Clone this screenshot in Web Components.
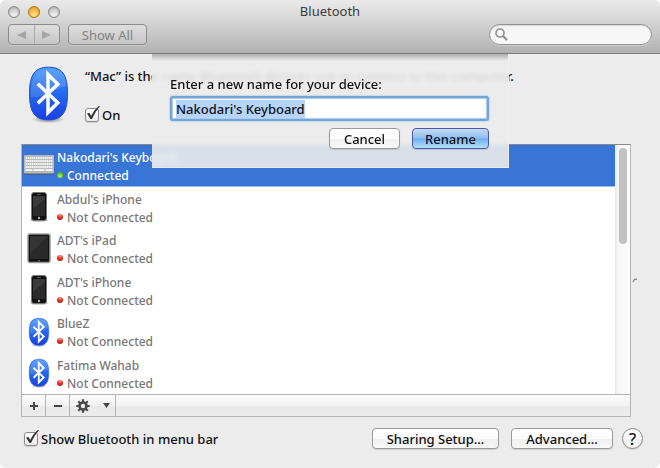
<!DOCTYPE html>
<html lang="en">
<head>
<meta charset="utf-8">
<title>Bluetooth</title>
<style>
body { margin: 0; background: #fff; font: 500 13px/18px "Noto Sans", "Open Sans", sans-serif; color: #111; }
</style>
</head>
<body>
<bt-window></bt-window>
<script>
const define = (name, html, setup) => customElements.define(name, class extends HTMLElement {
  constructor() {
    super();
    const t = document.createElement('template');
    t.innerHTML = html;
    this.attachShadow({ mode: 'open' }).append(t.content.cloneNode(true));
  }
  connectedCallback() { if (setup) setup(this, this.shadowRoot); }
});

define('bt-logo', `
<style>:host{display:block;flex:none} svg{display:block;width:100%;height:100%;overflow:visible}</style>
<svg viewBox="0 0 40 56" aria-hidden="true">
  <defs>
    <linearGradient id="g" x1="0" y1="0" x2="0" y2="1"><stop offset="0" stop-color="#4a98fb"/><stop offset=".5" stop-color="#2568f0"/><stop offset="1" stop-color="#1a3fe0"/></linearGradient>
    <radialGradient id="s"><stop offset="0" stop-color="#000" stop-opacity=".5"/><stop offset="1" stop-color="#000" stop-opacity="0"/></radialGradient>
  </defs>
  <ellipse cx="20" cy="54" rx="17" ry="4" fill="url(#s)"/>
  <path d="M20 .5C34 .5 39.500 8 39.500 27.500S34 54.500 20 54.500 .5 47 .5 27.500 6 .5 20 .5Z" fill="url(#g)" stroke="#1c4fd0"/>
  <path d="M2 31C2 9 7 2 20 2s18 6 18 18C28 21 15 33 2 31Z" fill="#fff" opacity=".12"/>
  <path d="M9 17.500 29.500 37 19.500 47V8L29.500 18 9 37.500" fill="none" stroke="#fff" stroke-width="3.600" stroke-linejoin="miter"/>
</svg>`);

define('bt-device-icon', `
<style>:host{display:grid;place-items:center;width:32px;height:36px;flex:none} svg{display:none} bt-logo{display:none;width:20px;height:28px}
:host([kind=keyboard]) .keyboard,:host([kind=phone]) .phone,:host([kind=pad]) .pad,:host([kind=logo]) bt-logo{display:block}</style>
<svg class="keyboard" width="30" height="20" viewBox="0 0 30 20">
  <rect y="1" width="30" height="19" rx="1" fill="#555" opacity=".6"/><rect width="30" height="18.500" rx="1" fill="#b9bab8"/>
  <path d="M1.500 3h27M1.500 6h27M1.500 9h27M1.500 12h27" stroke="#f4f4f4" stroke-width="2" stroke-dasharray="1.600 .5"/>
  <path d="M1.500 15h7M9.500 15h11M21.500 15h7" stroke="#f4f4f4" stroke-width="2"/>
</svg>
<svg class="phone" width="18" height="30" viewBox="0 0 18 30">
  <ellipse cx="9" cy="28" rx="9" ry="2" fill="#000" opacity=".2"/>
  <rect x="1.500" y=".5" width="15" height="28" rx="2.500" fill="#111" stroke="#777"/>
  <rect x="3" y="4" width="12" height="20" fill="#2b2b2b"/><path d="M3 4h12v3L3 17Z" fill="#3b3b3b"/>
  <path d="M7 2.500h4" stroke="#555"/><circle cx="9" cy="26" r="1.200" fill="#aaa"/>
</svg>
<svg class="pad" width="24" height="31" viewBox="0 0 24 31">
  <rect x="1" y="1" width="22" height="28.500" rx="2" fill="#111" stroke="#999" stroke-width="1.500"/>
  <rect x="3" y="3" width="18" height="23" fill="#292929"/><path d="M3 3h18L3 21Z" fill="#343434"/><circle cx="12" cy="27.700" r=".8" fill="#888"/>
</svg>
<bt-logo></bt-logo>`);

define('bt-device', `
<style>
:host{display:flex;align-items:center;gap:2px;padding-left:1px;color:#777;box-sizing:border-box;min-height:0;font-size:12px}
:host([selected]){background:#3875d7;color:#fff;border-bottom:1px solid #9dbdeb}
.text{line-height:18px;padding-top:3px}.status{display:flex;align-items:center;gap:4px}
i{width:6px;height:6px;margin-bottom:2px;border-radius:50%;background:radial-gradient(circle at 50% 20%,#ff9c90,#e02818 50%,#a81408)}
:host([selected]) i{background:radial-gradient(circle at 50% 70%,#b8ff60,#58c414 60%,#3c8c10)}
</style>
<bt-device-icon></bt-device-icon>
<div class="text"><div><slot></slot></div><div class="status"><i></i><span></span></div></div>`,
(el, r) => {
  r.querySelector('bt-device-icon').setAttribute('kind', el.getAttribute('kind'));
  r.querySelector('span').textContent = el.hasAttribute('selected') ? 'Connected' : 'Not Connected';
});

define('bt-button', `
<style>
:host{display:block}
button{display:block;width:100%;height:21px;padding:0 12px;box-sizing:border-box;font:inherit;line-height:18px;color:inherit;white-space:nowrap;
 border:1px solid #999;border-radius:4px;background:linear-gradient(#fff,#fbfbfb 50%,#f0f0f0 52%,#f8f8f8);box-shadow:0 1px 1px #0002}
:host([primary]) button{border-color:#4a5aa8;background:linear-gradient(#c4dbf6,#8fbdf2 49%,#6fadf0 51%,#b5e0fb)}
:host([toolbar]) button{color:#828282;border-color:#8b8b8b;background:linear-gradient(#dedede,#c6c6c6);box-shadow:0 1px 0 #ddd8}
:host([round]) button{padding:0;border-radius:50%;font-size:16px;border-color:#888}
</style>
<button type="button"><slot></slot></button>`);

define('bt-check', `
<style>
:host{display:block}
label{display:flex;align-items:center;gap:3px}
.box{display:grid;width:14px;height:14px}
input,svg{grid-area:1/1}
input{appearance:none;margin:0;width:14px;height:14px;box-sizing:border-box;border:1px solid #8c8c8c;border-radius:3px;background:linear-gradient(#fff,#f4f4f4 50%,#eaeaea);box-shadow:0 1px 1px #0002}
svg{width:14px;height:14px;overflow:visible;pointer-events:none}
</style>
<label><span class="box"><input type="checkbox" checked><svg viewBox="0 0 14 14"><path d="M2 5.500 4.500 5 6.200 8C8 4 10.500.8 14-2L15-1.500C11.500 2 9 6.500 7 11H5.600Z" fill="#333"/></svg></span><slot></slot></label>`);

define('bt-titlebar', `
<style>
:host{display:block;padding:0 8px 8px;border-bottom:1px solid #7c7c7c;background:linear-gradient(#eaeaea,#d2d2d2 45%,#b1b1b1);color:#3c3c3c;font-weight:400}
.title{display:grid;grid-template-columns:1fr auto 1fr;align-items:center;height:24px}
.lights{display:flex;gap:8px}
.lights i{width:12px;height:12px;box-sizing:border-box;border:1px solid #858585;border-radius:50%;background:radial-gradient(circle at 50% 80%,#f4f4f4,#bbb 80%)}
.lights .mid{border-color:#a8721c;background:radial-gradient(circle at 50% 75%,#ffe58a,#f0a42c 75%)}
h1{margin:0;padding-bottom:2px;font:inherit;line-height:20px}
.tools{display:flex;gap:8px;align-items:center}
.nav{display:flex;width:52px;height:21px;box-sizing:border-box;border:1px solid #8b8b8b;border-radius:4px;background:linear-gradient(#dedede,#c6c6c6);box-shadow:0 1px 0 #ddd8}
.nav button{flex:1;display:grid;place-items:center;padding:0;border:0;background:none}
.nav button+button{border-left:1px solid #aaa}
.nav svg{display:block}
bt-button{width:79px}
.search{display:flex;align-items:center;gap:4px;margin-left:auto;width:163px;height:21px;padding:0 8px 0 5px;box-sizing:border-box;border:1px solid #919191;border-radius:11px;background:#f6f6f6;box-shadow:inset 0 1px 1px #0002,0 1px 0 #ddd8}
.search svg{flex:none}
input{flex:1;min-width:0;border:0;padding:0;background:none;font:inherit;outline:0}
</style>
<div class="title"><div class="lights"><i></i><i class="mid"></i><i></i></div><h1><slot></slot></h1></div>
<div class="tools">
  <div class="nav">
    <button type="button" aria-label="Back"><svg width="9" height="8" viewBox="0 0 9 8"><path d="M9 0v8L0 4Z" fill="#a5a5a5"/></svg></button>
    <button type="button" aria-label="Forward"><svg width="9" height="8" viewBox="0 0 9 8"><path d="M0 0v8L9 4Z" fill="#a5a5a5"/></svg></button>
  </div>
  <bt-button toolbar>Show All</bt-button>
  <label class="search"><svg width="13" height="13" viewBox="0 0 13 13" fill="none" stroke="#8c8c8c"><circle cx="5" cy="5" r="4" stroke-width="1.600"/><path d="M8 8l4 4" stroke-width="2.200"/></svg><input type="search" aria-label="Search"></label>
</div>`);

define('bt-list', `
<style>
:host{display:block;border:1px solid #b4b4b4;border-top-color:#8a8a8a;background:#fff}
.view{display:flex;height:249px}
.rows{flex:1;display:grid;grid-auto-rows:1fr}
.track{width:15px;padding:3px 3px 0 4px;box-sizing:border-box;background:linear-gradient(90deg,#e8e8e8,#f6f6f6 20%,#fcfcfc)}
.thumb{height:96px;border-radius:4px;background:#c1c1c1}
.bar{display:flex;height:21px;border-top:1px solid #b4b4b4;background:linear-gradient(#fbfbfb,#f2f2f2 50%,#e9e9e9 52%,#ededed)}
.bar button{display:flex;align-items:center;justify-content:center;gap:13px;width:24px;padding:0;border:0;border-right:1px solid #b4b4b4;background:none}
.bar .gear{width:46px}
</style>
<div class="view"><div class="rows"><slot></slot></div><div class="track"><div class="thumb"></div></div></div>
<div class="bar">
  <button type="button" aria-label="Add"><svg width="8" height="8" viewBox="0 0 8 8"><path d="M0 4h8M4 0v8" stroke="#444" stroke-width="2"/></svg></button>
  <button type="button" aria-label="Remove"><svg width="8" height="8" viewBox="0 0 8 8"><path d="M0 4h8" stroke="#444" stroke-width="2"/></svg></button>
  <button type="button" class="gear" aria-label="Actions"><svg width="14" height="14" viewBox="-7 -7 14 14"><g stroke="#4a4a4a"><circle r="3.500" fill="none" stroke-width="2.600"/><path d="M0-6.700V-4M0 6.700V4M-6.700 0H-4M6.700 0H4M-4.700-4.700-3-3M4.700 4.700 3 3M-4.700 4.700-3 3M4.700-4.700 3-3" stroke-width="2.200"/></g></svg><svg width="7" height="5" viewBox="0 0 7 5"><path d="M0 0h7L3.500 5Z" fill="#444"/></svg></button>
</div>`);

define('bt-sheet', `
<style>
:host{display:block;box-sizing:border-box;padding:20px 19px 18px 18px;background:rgba(236,236,236,.9);backdrop-filter:blur(2px);border:solid #f0f0f0aa;border-width:0 1px 1px 0}
:host::before{content:"";position:absolute;inset:0 0 auto;height:7px;background:linear-gradient(#0004,#0000)}
label{display:block;line-height:20px}
input{display:block;width:100%;height:25px;margin:2px 0 7px;padding:1px 4px 0;box-sizing:border-box;border:2px solid #73a5d6;border-radius:3px;background:#fff;box-shadow:inset 0 0 1px 1px #a9c8e8,0 0 2px #73a5d6;font:inherit;color:#111;outline:0}
input::selection{background:#b5d5fd;color:#111}
.actions{display:flex;justify-content:flex-end;gap:12px}
.actions bt-button{width:71px}.actions [primary]{width:77px}
</style>
<label for="name"><slot></slot></label>
<input id="name" type="text" value="Nakodari's Keyboard">
<div class="actions"><bt-button>Cancel</bt-button><bt-button primary>Rename</bt-button></div>`,
(el, r) => { const i = r.querySelector('input'); i.focus(); i.select(); });

define('bt-window', `
<style>
:host{display:flex;flex-direction:column;min-height:100vh;border-radius:6px;overflow:hidden;background:#ececec}
main{flex:1;position:relative;padding:0 29px 0 21px}
.intro{display:flex;gap:17px;padding:12px 0 20px 8px}
.intro bt-logo{width:39px;height:56px}
.intro p{margin:0 0 20px;line-height:20px;white-space:nowrap}
.intro bt-check{line-height:18px}
.wrap{position:relative}
.spin{position:absolute;left:100%;top:134px;margin-left:1px}
footer{display:flex;align-items:center;gap:12px;padding:11px 0 19px 3px;margin-right:-12px}
footer bt-check{margin-right:auto}
.share{width:127px}.adv{width:102px}
footer [round]{width:21px;margin-left:-3px}
bt-sheet{position:absolute;top:0;left:50%;width:357px;margin-left:-178px}
</style>
<bt-titlebar>Bluetooth</bt-titlebar>
<main>
  <div class="intro"><bt-logo></bt-logo><div><p>“Mac” is the name Bluetooth devices use to connect to this computer.</p><bt-check>On</bt-check></div></div>
  <div class="wrap">
    <bt-list>
      <bt-device kind="keyboard" selected>Nakodari's Keyboard</bt-device>
      <bt-device kind="phone">Abdul's iPhone</bt-device>
      <bt-device kind="pad">ADT's iPad</bt-device>
      <bt-device kind="phone">ADT's iPhone</bt-device>
      <bt-device kind="logo">BlueZ</bt-device>
      <bt-device kind="logo">Fatima Wahab</bt-device>
    </bt-list>
    <svg class="spin" width="6" height="5" viewBox="0 0 6 5" fill="none" stroke="#888"><path d="M1 4 2 2M2 1.500 5 1.200" stroke-width="1.300"/></svg>
  </div>
  <footer><bt-check>Show Bluetooth in menu bar</bt-check><bt-button class="share">Sharing Setup…</bt-button><bt-button class="adv">Advanced…</bt-button><bt-button round>?</bt-button></footer>
  <bt-sheet>Enter a new name for your device:</bt-sheet>
</main>`);
</script>
</body>
</html>
